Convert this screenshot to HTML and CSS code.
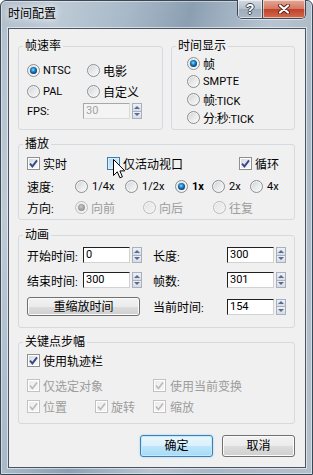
FILE: index.html
```html
<!DOCTYPE html>
<html lang="zh-CN">
<head>
<meta charset="utf-8">
<title>时间配置</title>
<link rel="stylesheet" href="styles.css">
</head>
<body>
<div class="window">
  <div class="titlebar">
    <span class="title">时间配置</span>
    <div class="caption-btns">
      <div class="cbtn help">?</div>
      <div class="cbtn close">
        <svg width="12" height="10" viewBox="0 0 12 10">
          <path d="M2 1.5 L10 8.5 M10 1.5 L2 8.5" stroke="#5a2218" stroke-width="4" stroke-linecap="round" fill="none"/>
          <path d="M2 1.5 L10 8.5 M10 1.5 L2 8.5" stroke="#fff" stroke-width="2.2" stroke-linecap="round" fill="none"/>
        </svg>
      </div>
    </div>
  </div>

  <div class="client">
    <div class="toprow">
      <div class="group g-rate">
        <span class="legend">帧速率</span>
        <div class="rate-grid">
          <label class="opt"><span class="radio on"></span><span class="lt">NTSC</span></label>
          <label class="opt"><span class="radio"></span>电影</label>
          <label class="opt"><span class="radio"></span><span class="lt">PAL</span></label>
          <label class="opt"><span class="radio"></span>自定义</label>
        </div>
        <div class="fps-row">
          <span class="fps-label lt">FPS:</span>
          <span class="field disabled">30</span>
          <span class="spin"><i class="up"></i><i class="down"></i></span>
        </div>
      </div>

      <div class="group g-display">
        <span class="legend">时间显示</span>
        <label class="opt r18"><span class="radio on"></span>帧</label>
        <label class="opt r18"><span class="radio"></span><span class="lt">SMPTE</span></label>
        <label class="opt r18"><span class="radio"></span><span>帧<span class="lt colon">:</span><span class="lt">TICK</span></span></label>
        <label class="opt r18"><span class="radio"></span><span>分<span class="lt colon">:</span>秒<span class="lt colon">:</span><span class="lt">TICK</span></span></label>
      </div>
    </div>

    <div class="group g-play">
      <span class="legend">播放</span>
      <div class="row">
        <label class="opt w80"><span class="check"><svg class="tick" width="9" height="9" viewBox="0 0 9 9"><path d="M1 4.6 L3.4 7.4 L8 1.4"/></svg></span>实时</label>
        <label class="opt w132 hov-wrap"><span class="check hover"></span>仅活动视口
          <svg class="cursor" width="13" height="20" viewBox="0 0 13 20"><path d="M0.5 0.5 L0.5 16.5 L4.3 12.8 L6.9 18.8 L9.4 17.8 L6.9 11.9 L11.8 11.9 Z" fill="#fff" stroke="#000" stroke-width="1" stroke-linejoin="round"/></svg>
        </label>
        <label class="opt"><span class="check"><svg class="tick" width="9" height="9" viewBox="0 0 9 9"><path d="M1 4.6 L3.4 7.4 L8 1.4"/></svg></span>循环</label>
      </div>
      <div class="row row-speed">
        <span class="rlabel">速度<span class="lt">:</span></span>
        <label class="opt lt4 w50"><span class="radio"></span><span class="lt">1/4x</span></label>
        <label class="opt lt4 w50"><span class="radio"></span><span class="lt">1/2x</span></label>
        <label class="opt lt4 w37"><span class="radio on"></span><span class="lt b">1x</span></label>
        <label class="opt lt4 w38"><span class="radio"></span><span class="lt">2x</span></label>
        <label class="opt lt4"><span class="radio"></span><span class="lt">4x</span></label>
      </div>
      <div class="row row-dir">
        <span class="rlabel">方向<span class="lt">:</span></span>
        <label class="opt dis w68"><span class="radio on dis"></span>向前</label>
        <label class="opt dis w70"><span class="radio dis"></span>向后</label>
        <label class="opt dis"><span class="radio dis"></span>往复</label>
      </div>
    </div>

    <div class="group g-anim">
      <span class="legend">动画</span>
      <div class="arow">
        <span class="alabel">开始时间<span class="lt">:</span></span>
        <span class="field">0</span>
        <span class="spin"><i class="up"></i><i class="down"></i></span>
        <span class="alabel2">长度<span class="lt">:</span></span>
        <span class="field">300</span>
        <span class="spin"><i class="up"></i><i class="down"></i></span>
      </div>
      <div class="arow">
        <span class="alabel">结束时间<span class="lt">:</span></span>
        <span class="field">300</span>
        <span class="spin"><i class="up"></i><i class="down"></i></span>
        <span class="alabel2">帧数<span class="lt">:</span></span>
        <span class="field">301</span>
        <span class="spin"><i class="up"></i><i class="down"></i></span>
      </div>
      <div class="arow arow-btn">
        <button class="btn rescale">重缩放时间</button>
        <span class="alabel2 after-btn">当前时间<span class="lt">:</span></span>
        <span class="field">154</span>
        <span class="spin"><i class="up"></i><i class="down"></i></span>
      </div>
    </div>

    <div class="group g-keys">
      <span class="legend">关键点步幅</span>
      <div class="row">
        <label class="opt"><span class="check"><svg class="tick" width="9" height="9" viewBox="0 0 9 9"><path d="M1 4.6 L3.4 7.4 L8 1.4"/></svg></span>使用轨迹栏</label>
      </div>
      <div class="row krow2">
        <label class="opt dis kw126"><span class="check dis"><svg class="tick" width="9" height="9" viewBox="0 0 9 9"><path d="M1 4.6 L3.4 7.4 L8 1.4"/></svg></span>仅选定对象</label>
        <label class="opt dis kgap"><span class="check dis"><svg class="tick" width="9" height="9" viewBox="0 0 9 9"><path d="M1 4.6 L3.4 7.4 L8 1.4"/></svg></span>使用当前变换</label>
      </div>
      <div class="row krow3">
        <label class="opt dis w68"><span class="check dis"><svg class="tick" width="9" height="9" viewBox="0 0 9 9"><path d="M1 4.6 L3.4 7.4 L8 1.4"/></svg></span>位置</label>
        <label class="opt dis w58"><span class="check dis"><svg class="tick" width="9" height="9" viewBox="0 0 9 9"><path d="M1 4.6 L3.4 7.4 L8 1.4"/></svg></span>旋转</label>
        <label class="opt dis kgap"><span class="check dis"><svg class="tick" width="9" height="9" viewBox="0 0 9 9"><path d="M1 4.6 L3.4 7.4 L8 1.4"/></svg></span>缩放</label>
      </div>
    </div>

    <div class="buttons">
      <button class="btn default">确定</button>
      <button class="btn">取消</button>
    </div>
  </div>
</div>
</body>
</html>
```

FILE: styles.css
```css
* { box-sizing: border-box; }
html, body { margin: 0; padding: 0; }
body {
  width: 313px;
  height: 475px;
  overflow: hidden;
  background: #fff;
  font-family: Roboto, "Noto Sans CJK SC", sans-serif;
  font-size: 12px;
  color: #000;
}

.window {
  width: 313px;
  height: 475px;
  display: flex;
  flex-direction: column;
  border: 1px solid #3a4856;
  border-radius: 6px 6px 0 0;
  background:
    linear-gradient(105deg, #b1bfcc 0%, #bdcad6 14%, #a7b8c8 30%, #8c9fb2 44%, #9fb0c1 52%, #b8c5d1 63%, #a9b8c6 76%, #b3c0cc 100%);
  box-shadow: inset 0 0 0 1px rgba(255,255,255,0.45);
}

.titlebar {
  height: 27px;
  display: flex;
  justify-content: space-between;
  align-items: flex-start;
  padding-left: 7px;
}
.title {
  line-height: 26px;
  font-size: 12px;
  color: #000;
  text-shadow: 0 0 6px #fff, 0 0 10px rgba(255,255,255,0.9);
}
.caption-btns {
  display: flex;
  margin-top: -1px;
  margin-right: 6px;
  border: 1px solid #3d4856;
  border-top: none;
  border-radius: 0 0 5px 5px;
  overflow: hidden;
  box-shadow: 0 1px 0 rgba(255,255,255,0.5);
}
.cbtn {
  height: 18px;
  display: flex;
  align-items: center;
  justify-content: center;
  box-shadow: inset 0 0 0 1px rgba(255,255,255,0.55);
}
.help {
  width: 25px;
  border-right: 1px solid #3d4856;
  background: linear-gradient(#d3dbe3 0%, #b4c0cc 50%, #9eadbb 51%, #aab8c6 100%);
  color: #fff;
  font-family: "Liberation Sans", sans-serif;
  font-weight: bold;
  font-size: 14px;
  text-shadow: 1px 0 0 #3a4450, -1px 0 0 #3a4450, 0 1px 0 #3a4450, 0 -1px 0 #3a4450;
}
.close {
  width: 42px;
  background: linear-gradient(#e6a897 0%, #d37a63 48%, #c1422a 52%, #d26a4f 100%);
}

.client {
  flex: 1;
  margin: 0 6px 6px 7px;
  border: 1px solid #4a5561;
  background: #f0f0f0;
  box-shadow: 0 0 0 1px rgba(255,255,255,0.55);
  padding: 17px 10px 0 9px;
  display: flex;
  flex-direction: column;
}

.group {
  position: relative;
  border: 1px solid #d5dadf;
  border-radius: 3px;
}
.legend {
  position: absolute;
  top: -8px;
  left: 4px;
  padding: 0 2px;
  line-height: 14px;
  font-size: 12px;
  background: #f0f0f0;
  white-space: nowrap;
}

.lt { font-family: Roboto, sans-serif; font-size: 11px; }
.colon { margin: 0 -0.5px; }
.b { font-weight: bold; }

.toprow { display: flex; gap: 8px; }
.g-rate { width: 145px; padding: 15px 4px 10px 8px; }
.g-display { flex: 1; padding: 7px 4px 3px 15px; }

.opt {
  display: flex;
  align-items: center;
  gap: 3px;
  height: 16px;
  white-space: nowrap;
  position: relative;
}
.opt.lt4 { gap: 4px; }
.r18 { height: 18px; }
.dis { color: #9c9c9c; }

.rate-grid {
  display: grid;
  grid-template-columns: 60px auto;
  row-gap: 5px;
}
.fps-row {
  display: flex;
  align-items: center;
  height: 16px;
  margin-top: 4px;
}
.fps-label { width: 56px; }

/* radio */
.radio {
  width: 13px;
  height: 13px;
  flex: none;
  border-radius: 50%;
  border: 1px solid #8c8f93;
  background: linear-gradient(135deg, #cdcfd2 0%, #e8e9ea 50%, #fbfbfb 100%);
  box-shadow: inset 0 0 0 1px #f4f4f4;
  display: flex;
  align-items: center;
  justify-content: center;
}
.radio.on::after {
  content: "";
  width: 7px;
  height: 7px;
  border-radius: 50%;
  background: radial-gradient(circle at 45% 40%, #8fe0ff 0, #2a9be0 1.5px, #0f5e9c 3px, #0a3f6e 4px);
}
.radio.dis {
  border-color: #bcbcbc;
  background: linear-gradient(135deg, #e3e3e3 0%, #f4f4f4 100%);
}
.radio.on.dis::after {
  background: radial-gradient(circle at 45% 40%, #cfcfcf 0, #a9a9a9 2px, #959595 4px);
}

/* checkbox */
.check {
  width: 13px;
  height: 13px;
  flex: none;
  border: 1px solid #8e8f8f;
  background: linear-gradient(135deg, #d0d3d8 0%, #eceef0 55%, #fbfbfb 100%);
  box-shadow: inset 0 0 0 1px #fff;
  display: flex;
  align-items: center;
  justify-content: center;
}
.tick path { fill: none; stroke: #34488a; stroke-width: 1.9; }
.check.dis {
  border-color: #c2c2c2;
  background: linear-gradient(135deg, #ececec, #f7f7f7);
}
.check.dis .tick path { stroke: #b9b9b9; stroke-width: 1.6; }
.check.hover {
  border-color: #3c7fb1;
  background: linear-gradient(135deg, #a8d7f2 0%, #cde9f8 60%, #e4f3fc 100%);
  box-shadow: inset 0 0 0 1px #def0fb;
}
.hov-wrap { position: relative; }
.cursor {
  position: absolute;
  left: 6px;
  top: 5px;
}

/* playback */
.g-play { margin-top: 14px; padding: 9px 8px 3px 8px; }
.row { display: flex; align-items: center; height: 18px; }
.row .opt { height: 18px; }
.row-speed { margin-top: 5px; }
.row-dir { margin-top: 3px; }
.rlabel { width: 48px; }
.w80 { width: 80px; }
.w132 { width: 132px; }
.w50 { width: 50px; }
.w37 { width: 37px; }
.w38 { width: 38px; }
.w68 { width: 68px; }
.w70 { width: 70px; }
.w58 { width: 58px; }

/* fields */
.field {
  width: 47px;
  height: 16px;
  flex: none;
  background: #fff;
  border: 1px solid;
  border-color: #202020 #d2d2d2 #d2d2d2 #202020;
  padding-left: 2px;
  font-family: Roboto, sans-serif;
  font-size: 11px;
  line-height: 14px;
}
.field.disabled {
  background: #f4f4f4;
  border-color: #a8a8a8 #dadada #dadada #a8a8a8;
  color: #a3a3a3;
}
.spin {
  width: 10px;
  height: 16px;
  flex: none;
  margin-left: 2px;
  display: flex;
  flex-direction: column;
}
.spin i {
  flex: 1;
  border: 1px solid #a9b0bd;
  background: linear-gradient(#eef1f5, #d6dce5);
  display: flex;
  align-items: center;
  justify-content: center;
}
.spin i + i { border-top: none; }
.spin i.up::after {
  content: "";
  border-left: 3px solid transparent;
  border-right: 3px solid transparent;
  border-bottom: 3px solid #5a6b92;
}
.spin i.down::after {
  content: "";
  border-left: 3px solid transparent;
  border-right: 3px solid transparent;
  border-top: 3px solid #5a6b92;
}

/* animation */
.g-anim { margin-top: 15px; padding: 11px 8px 11px 8px; }
.arow { display: flex; align-items: center; height: 16px; }
.arow + .arow { margin-top: 9px; }
.arow-btn { height: 19px; }
.alabel { width: 56px; }
.alabel2 { width: 74px; margin-left: 11px; }
.alabel2.after-btn { margin-left: 13px; }

.btn {
  font-family: Roboto, "Noto Sans CJK SC", sans-serif;
  font-size: 12px;
  color: #000;
  border: 1px solid #707070;
  border-radius: 3px;
  background: linear-gradient(#f2f2f2 0%, #ebebeb 50%, #dddddd 51%, #cfcfcf 100%);
  box-shadow: inset 0 0 0 1px #fbfbfb;
  padding: 0;
  line-height: 16px;
}
.rescale { width: 113px; height: 19px; }

/* keys */
.g-keys { margin-top: 14px; padding: 8px 8px 8px 8px; }
.krow2 { margin-top: 7px; }
.krow3 { margin-top: 3px; }
.kw126 { width: 126px; }
.kgap { gap: 2px; }
.g-keys .opt.kgap .check { margin-right: 2px; }

/* dialog buttons */
.buttons {
  display: flex;
  justify-content: flex-end;
  gap: 9px;
  margin-top: 11px;
}
.buttons .btn { width: 73px; height: 22px; }
.btn.default {
  border-color: #3c7fb1;
  background: linear-gradient(#eaf6fd 0%, #d9f0fc 50%, #bee6fd 51%, #a7d9f5 100%);
  box-shadow: inset 0 0 0 1px #bfeaff, 0 0 2px rgba(90,180,230,0.6);
}
```
